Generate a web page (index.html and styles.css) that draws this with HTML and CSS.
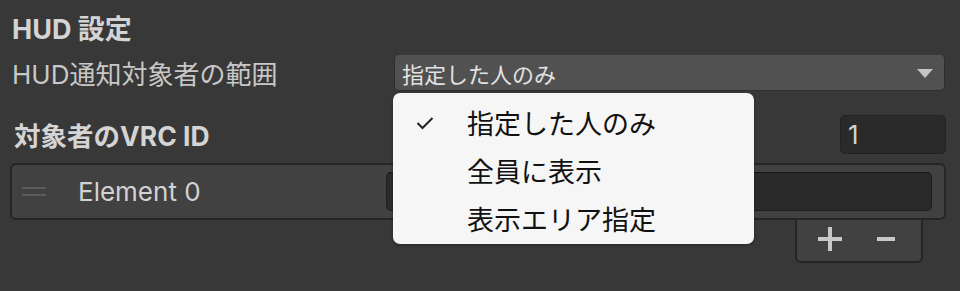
FILE: index.html
```html
<!DOCTYPE html>
<html lang="ja">
<head>
<meta charset="utf-8">
<link rel="stylesheet" href="styles.css">
</head>
<body>
<div class="panel">
  <div class="header">HUD 設定</div>
  <div class="field-row">
    <div class="label">HUD通知対象者の範囲</div>
    <div class="dropdown">
      <span class="dropdown-value">指定した人のみ</span>
      <span class="arrow"></span>
    </div>
  </div>
  <div class="list-header">
    <div class="header header-list">対象者のVRC ID</div>
    <div class="count">1</div>
  </div>
  <div class="list-box">
    <div class="handle"><span></span><span></span></div>
    <div class="element-label">Element 0</div>
    <div class="text-field"></div>
  </div>
  <div class="footer-row">
    <div class="footer">
      <svg class="btn" width="26" height="26" viewBox="0 0 26 26"><path d="M13 1V25M1 13H25" stroke="#c8c8c8" stroke-width="4"/></svg>
      <svg class="btn" width="20" height="26" viewBox="0 0 20 26"><path d="M1 13H19" stroke="#c8c8c8" stroke-width="4"/></svg>
    </div>
  </div>
</div>
<div class="menu">
  <div class="menu-item">
    <svg class="check" width="18" height="14" viewBox="0 0 18 14"><path d="M1.5 7L6.5 12L16.5 2" fill="none" stroke="#222" stroke-width="2"/></svg>
    <span>指定した人のみ</span>
  </div>
  <div class="menu-item"><span>全員に表示</span></div>
  <div class="menu-item"><span>表示エリア指定</span></div>
</div>
</body>
</html>
```
FILE: styles.css
```css
html, body {
  margin: 0;
  padding: 0;
  background: #383838;
  width: 960px;
  height: 291px;
  overflow: hidden;
  font-family: Inter, "Noto Sans CJK JP", sans-serif;
  color: #d2d2d2;
}
.panel {
  padding: 8px 14px 0 10px;
}
.header {
  height: 38px;
  display: flex;
  align-items: center;
  padding-left: 2px;
  font-weight: 700;
  font-size: 27px;
  color: #d4d4d4;
  white-space: nowrap;
}
.field-row {
  display: flex;
  align-items: center;
  margin-top: 8px;
  height: 37px;
}
.label {
  width: 382px;
  padding-left: 2px;
  font-size: 26px;
  color: #c8c8c8;
  white-space: nowrap;
}
.dropdown {
  flex: 1;
  height: 37px;
  box-sizing: border-box;
  background: #515151;
  border: 1px solid #2e2e2e;
  border-top-color: #3a3a3a;
  border-radius: 5px;
  display: flex;
  align-items: center;
  justify-content: space-between;
  padding: 0 11px 0 7px;
  margin-right: 1px;
}
.dropdown-value {
  font-size: 22px;
  color: #e2e2e2;
}
.arrow {
  width: 0;
  height: 0;
  border-left: 8.5px solid transparent;
  border-right: 8.5px solid transparent;
  border-top: 9px solid #c4c4c4;
  margin-top: 2px;
}
.list-header {
  display: flex;
  align-items: center;
  justify-content: space-between;
  margin-top: 24px;
  height: 39px;
}
.header-list {
  padding-left: 4px;
  font-size: 26.5px;
}
.count {
  width: 106px;
  height: 39px;
  box-sizing: border-box;
  background: #2a2a2a;
  border: 1px solid #222;
  border-radius: 5px;
  font-size: 26px;
  color: #d2d2d2;
  display: flex;
  align-items: center;
  padding-left: 7px;
}
.list-box {
  margin-top: 9px;
  height: 57px;
  box-sizing: border-box;
  background: #414141;
  border: 2px solid #252525;
  border-radius: 6px;
  display: flex;
  align-items: center;
  padding: 0 12px 0 10px;
  position: relative;
  z-index: 1;
}
.handle {
  width: 24px;
  display: flex;
  flex-direction: column;
  gap: 5px;
  margin-right: 32px;
}
.handle span {
  display: block;
  height: 2px;
  background: #5c5c5c;
}
.element-label {
  width: 308px;
  font-size: 26px;
  color: #d2d2d2;
}
.text-field {
  flex: 1;
  height: 39px;
  box-sizing: border-box;
  background: #2a2a2a;
  border: 1px solid #1f1f1f;
  border-top-color: #151515;
  border-radius: 5px;
}
.footer-row {
  display: flex;
  justify-content: flex-end;
  padding-right: 23px;
}
.footer {
  width: 128px;
  height: 45px;
  box-sizing: border-box;
  margin-top: -2px;
  background: #414141;
  border: 2px solid #252525;
  border-top: none;
  border-radius: 0 0 6px 6px;
  display: flex;
  align-items: center;
  justify-content: center;
  gap: 33px;
  padding-right: 6px;
  padding-bottom: 2px;
}
.btn {
  display: block;
}
.menu {
  position: absolute;
  left: 393px;
  top: 93px;
  width: 361px;
  height: 151px;
  box-sizing: border-box;
  background: #f6f6f6;
  border-radius: 7px;
  box-shadow: 0 1px 3px rgba(0, 0, 0, 0.35);
  padding-top: 5px;
  z-index: 5;
}
.menu-item {
  height: 48px;
  display: flex;
  align-items: center;
  position: relative;
  padding-left: 74px;
  font-family: "Noto Sans CJK JP", sans-serif;
  font-size: 27px;
  color: #111;
}
.check {
  position: absolute;
  left: 23px;
  top: 18px;
}
```
